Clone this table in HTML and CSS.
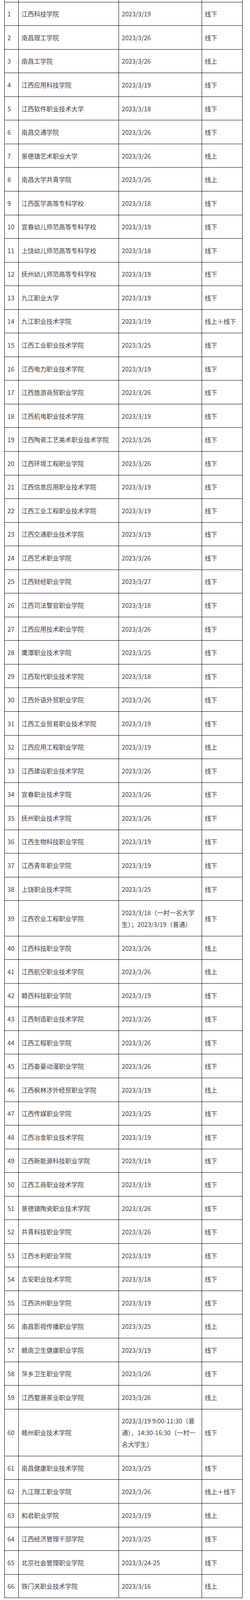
FILE: index.html
```html
<!DOCTYPE html>
<html lang="zh-CN">
<head>
<meta charset="utf-8">
<title>院校考试安排</title>
<link rel="stylesheet" href="styles.css">
</head>
<body>
<table class="sheet">
<colgroup><col class="c-no"><col class="c-name"><col class="c-date"><col class="c-mode"></colgroup>
<tbody>
<tr class="cut"><td></td><td></td><td></td><td></td></tr>
<tr><td>1</td><td>江西科技学院</td><td>2023/3/19</td><td>线下</td></tr>
<tr><td>2</td><td>南昌理工学院</td><td>2023/3/26</td><td>线下</td></tr>
<tr><td>3</td><td>南昌工学院</td><td>2023/3/26</td><td>线上</td></tr>
<tr><td>4</td><td>江西应用科技学院</td><td>2023/3/19</td><td>线下</td></tr>
<tr><td>5</td><td>江西软件职业技术大学</td><td>2023/3/18</td><td>线下</td></tr>
<tr><td>6</td><td>南昌交通学院</td><td>2023/3/26</td><td>线下</td></tr>
<tr><td>7</td><td>景德镇艺术职业大学</td><td>2023/3/26</td><td>线上</td></tr>
<tr><td>8</td><td>南昌大学共青学院</td><td>2023/3/26</td><td>线上</td></tr>
<tr><td>9</td><td>江西医学高等专科学校</td><td>2023/3/18</td><td>线下</td></tr>
<tr><td>10</td><td>宜春幼儿师范高等专科学校</td><td>2023/3/19</td><td>线下</td></tr>
<tr><td>11</td><td>上饶幼儿师范高等专科学校</td><td>2023/3/18</td><td>线下</td></tr>
<tr><td>12</td><td>抚州幼儿师范高等专科学校</td><td>2023/3/19</td><td>线下</td></tr>
<tr><td>13</td><td>九江职业大学</td><td>2023/3/19</td><td>线下</td></tr>
<tr><td>14</td><td>九江职业技术学院</td><td>2023/3/19</td><td>线上＋线下</td></tr>
<tr><td>15</td><td>江西工业职业技术学院</td><td>2023/3/25</td><td>线下</td></tr>
<tr><td>16</td><td>江西电力职业技术学院</td><td>2023/3/19</td><td>线下</td></tr>
<tr><td>17</td><td>江西旅游商贸职业学院</td><td>2023/3/26</td><td>线下</td></tr>
<tr><td>18</td><td>江西机电职业技术学院</td><td>2023/3/19</td><td>线下</td></tr>
<tr><td>19</td><td>江西陶瓷工艺美术职业技术学院</td><td>2023/3/26</td><td>线下</td></tr>
<tr><td>20</td><td>江西环境工程职业学院</td><td>2023/3/26</td><td>线下</td></tr>
<tr><td>21</td><td>江西信息应用职业技术学院</td><td>2023/3/19</td><td>线下</td></tr>
<tr><td>22</td><td>江西工业工程职业技术学院</td><td>2023/3/19</td><td>线下</td></tr>
<tr><td>23</td><td>江西交通职业技术学院</td><td>2023/3/19</td><td>线下</td></tr>
<tr><td>24</td><td>江西艺术职业学院</td><td>2023/3/26</td><td>线下</td></tr>
<tr><td>25</td><td>江西财经职业学院</td><td>2023/3/27</td><td>线下</td></tr>
<tr><td>26</td><td>江西司法警官职业学院</td><td>2023/3/18</td><td>线下</td></tr>
<tr><td>27</td><td>江西应用技术职业学院</td><td>2023/3/26</td><td>线下</td></tr>
<tr><td>28</td><td>鹰潭职业技术学院</td><td>2023/3/25</td><td>线下</td></tr>
<tr><td>29</td><td>江西现代职业技术学院</td><td>2023/3/18</td><td>线下</td></tr>
<tr><td>30</td><td>江西外语外贸职业学院</td><td>2023/3/26</td><td>线下</td></tr>
<tr><td>31</td><td>江西工业贸易职业技术学院</td><td>2023/3/19</td><td>线下</td></tr>
<tr><td>32</td><td>江西应用工程职业学院</td><td>2023/3/19</td><td>线上</td></tr>
<tr><td>33</td><td>江西建设职业技术学院</td><td>2023/3/26</td><td>线下</td></tr>
<tr><td>34</td><td>宜春职业技术学院</td><td>2023/3/26</td><td>线下</td></tr>
<tr><td>35</td><td>抚州职业技术学院</td><td>2023/3/26</td><td>线下</td></tr>
<tr><td>36</td><td>江西生物科技职业学院</td><td>2023/3/19</td><td>线下</td></tr>
<tr><td>37</td><td>江西青年职业学院</td><td>2023/3/19</td><td>线下</td></tr>
<tr><td>38</td><td>上饶职业技术学院</td><td>2023/3/25</td><td>线下</td></tr>
<tr class="l2"><td>39</td><td>江西农业工程职业学院</td><td>2023/3/18（一村一名大学生）；2023/3/19（普通）</td><td>线下</td></tr>
<tr><td>40</td><td>江西科技职业学院</td><td>2023/3/26</td><td>线上</td></tr>
<tr><td>41</td><td>江西航空职业技术学院</td><td>2023/3/26</td><td>线上</td></tr>
<tr><td>42</td><td>赣西科技职业学院</td><td>2023/3/19</td><td>线下</td></tr>
<tr><td>43</td><td>江西制造职业技术学院</td><td>2023/3/26</td><td>线下</td></tr>
<tr><td>44</td><td>江西工程职业学院</td><td>2023/3/26</td><td>线下</td></tr>
<tr><td>45</td><td>江西泰豪动漫职业学院</td><td>2023/3/26</td><td>线下</td></tr>
<tr><td>46</td><td>江西枫林涉外经贸职业学院</td><td>2023/3/19</td><td>线上</td></tr>
<tr><td>47</td><td>江西传媒职业学院</td><td>2023/3/25</td><td>线下</td></tr>
<tr><td>48</td><td>江西冶金职业技术学院</td><td>2023/3/19</td><td>线下</td></tr>
<tr><td>49</td><td>江西新能源科技职业学院</td><td>2023/3/19</td><td>线下</td></tr>
<tr><td>50</td><td>江西工商职业技术学院</td><td>2023/3/19</td><td>线下</td></tr>
<tr><td>51</td><td>景德镇陶瓷职业技术学院</td><td>2023/3/26</td><td>线下</td></tr>
<tr><td>52</td><td>共青科技职业学院</td><td>2023/3/26</td><td>线下</td></tr>
<tr><td>53</td><td>江西水利职业学院</td><td>2023/3/19</td><td>线下</td></tr>
<tr><td>54</td><td>吉安职业技术学院</td><td>2023/3/18</td><td>线下</td></tr>
<tr><td>55</td><td>江西洪州职业学院</td><td>2023/3/19</td><td>线下</td></tr>
<tr><td>56</td><td>南昌影视传播职业学院</td><td>2023/3/25</td><td>线上</td></tr>
<tr><td>57</td><td>赣南卫生健康职业学院</td><td>2023/3/19</td><td>线下</td></tr>
<tr><td>58</td><td>萍乡卫生职业学院</td><td>2023/3/26</td><td>线下</td></tr>
<tr><td>59</td><td>江西婺源茶业职业学院</td><td>2023/3/26</td><td>线上</td></tr>
<tr class="l3"><td>60</td><td>赣州职业技术学院</td><td>2023/3/19 9:00-11:30（普通），14:30-16:30（一村一名大学生）</td><td>线下</td></tr>
<tr><td>61</td><td>南昌健康职业技术学院</td><td>2023/3/25</td><td>线下</td></tr>
<tr><td>62</td><td>九江理工职业学院</td><td>2023/3/26</td><td>线上＋线下</td></tr>
<tr><td>63</td><td>和君职业学院</td><td>2023/3/19</td><td>线上</td></tr>
<tr><td>64</td><td>江西经济管理干部学院</td><td>2023/3/25</td><td>线下</td></tr>
<tr><td>65</td><td>北京社会管理职业学院</td><td>2023/3/24-25</td><td>线下</td></tr>
<tr><td>66</td><td>铁门关职业技术学院</td><td>2023/3/16</td><td>线上</td></tr>
</tbody>
</table>
</body>
</html>
```
FILE: styles.css
```css
html, body {
  margin: 0;
  padding: 0;
  background: #ffffff;
}

body {
  font-family: "Noto Sans CJK SC", sans-serif;
  font-size: 16px;
  color: #3e3e3e;
}

.sheet {
  margin-left: 11px;
  width: 611px;
  table-layout: fixed;
  border-collapse: separate;
  border-spacing: 0;
}

.c-no { width: 37px; }
.c-name { width: 257px; }
.c-date { width: 213px; }
.c-mode { width: 104px; }

.sheet td {
  box-sizing: border-box;
  height: 60.56px;
  border-right: 1px solid #000;
  border-bottom: 1px solid #000;
  padding: 0 13px 0 7px;
  line-height: 30px;
  vertical-align: middle;
  text-align: left;
}

.sheet td:first-child {
  border-left: 1px solid #000;
}

.sheet tr.l2 td { height: 90.38px; }
.sheet tr.l3 td { height: 120.2px; }

.sheet .cut td {
  height: 5.59px;
  padding: 0;
  line-height: 0;
}
```
